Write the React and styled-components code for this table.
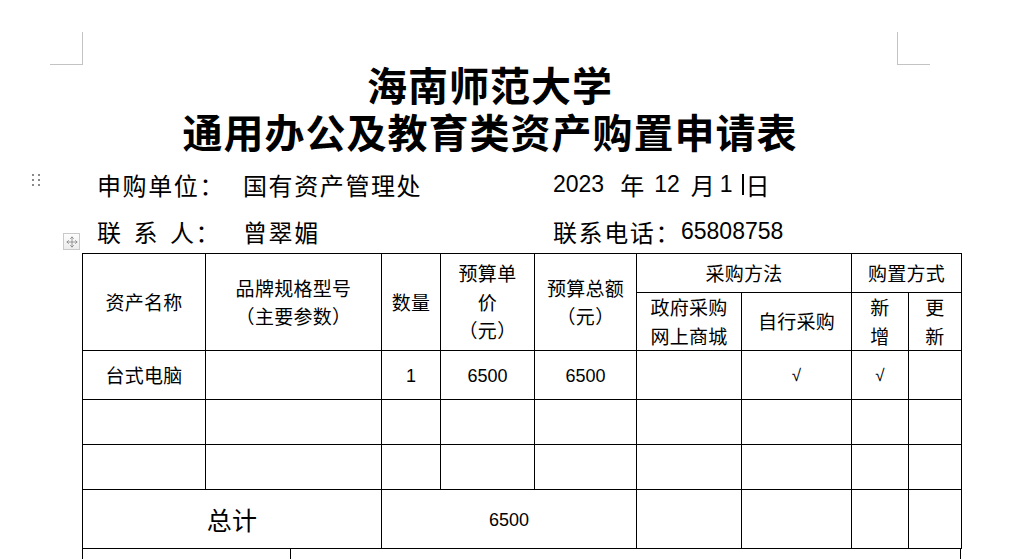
import React from "react";
import styled, { createGlobalStyle } from "styled-components";
import { Move } from "lucide-react";

const GlobalStyle = createGlobalStyle`
  html, body {
    margin: 0;
    padding: 0;
    background: #fff;
    height: 559px;
    overflow: hidden;
  }
  body {
    font-family: "Noto Sans CJK SC", sans-serif;
    color: #000;
  }
`;

const Page = styled.div`
  position: relative;
  width: 1009px;
  height: 559px;
  overflow: hidden;
`;

// word page corner marks
const CropRow = styled.div`
  display: flex;
  justify-content: space-between;
  margin: 0 79px 0 50px;
  padding-top: 32px;
`;

const CropMark = styled.div`
  width: 33px;
  height: 33px;
  border-bottom: 1px solid #c3c3c3;
  ${(p) => (p.$side === "left" ? "border-right" : "border-left")}: 1px solid #c3c3c3;
  box-sizing: border-box;
`;

const Title = styled.h1`
  margin: -4px 29px 0 0;
  font-size: 40px;
  line-height: 47px;
  font-weight: 700;
  letter-spacing: 1px;
  text-align: center;
`;

const DragDots = styled.div`
  position: absolute;
  left: 32px;
  top: 174px;
  display: grid;
  grid-template-columns: 2px 2px;
  gap: 3px 4px;

  span {
    width: 2px;
    height: 2px;
    background: #8a8a8a;
  }
`;

const Info = styled.div`
  margin-top: 4px;
`;

const InfoRow = styled.div`
  display: flex;
  align-items: center;
  box-sizing: border-box;
  height: 47px;
  padding: 4px 0 0 97px;
  font-size: 24px;
  letter-spacing: 1.6px;
  white-space: nowrap;
`;

const Field = styled.div`
  display: flex;
  align-items: center;
  width: ${(p) => p.$w || 456}px;
`;

const Label = styled.span`
  display: inline-block;
  width: 146px;
`;

const Spread = styled.span`
  letter-spacing: 12.5px;
`;

const Num = styled.span`
  font-family: "Liberation Sans", sans-serif;
  font-size: 23px;
  letter-spacing: 0;
`;

const Unit = styled.span`
  margin: 0 ${(p) => p.$r || 0}px 0 ${(p) => p.$l || 0}px;
  letter-spacing: 0;
`;

const Caret = styled.span`
  display: inline-block;
  width: 2px;
  height: 21px;
  background: #000;
  margin: 0 2px 0 9px;
`;

const TableWrap = styled.div`
  position: relative;
  margin-left: 82px;
  width: 879px;
`;

const MoveHandle = styled.div`
  position: absolute;
  left: -19px;
  top: -20px;
  width: 15px;
  height: 15px;
  border: 1px solid #c9c9c9;
  background: linear-gradient(#fdfdfd, #ececec);
  display: flex;
  align-items: center;
  justify-content: center;
  color: #7c7c7c;
`;

const Table = styled.table`
  border-collapse: collapse;
  table-layout: fixed;
  width: 879px;
  font-size: 19px;
  letter-spacing: 0.3px;
`;

const Cell = styled.td`
  border: 1px solid #000;
  padding: 0;
  text-align: center;
  vertical-align: middle;
  line-height: 28.5px;
  height: ${(p) => p.$h}px;
  font-size: ${(p) => (p.$big ? "25px" : "inherit")};
`;

const Digits = styled.span`
  font-family: "Liberation Sans", sans-serif;
  font-size: 18px;
  letter-spacing: 0;
`;

const Check = styled.span`
  font-family: "Liberation Sans", sans-serif;
  font-size: 17px;
`;

const BottomRow = styled.div`
  display: grid;
  grid-template-columns: 208px 1fr;
  height: 40px;
  border-left: 1px solid #000;
  border-right: 1px solid #000;
  box-sizing: border-box;

  div:first-child {
    border-right: 1px solid #000;
  }
`;

const colWidths = [123, 176, 59, 94, 102, 105, 110, 57, 53];

const rows = [
  { h: 48, cells: ["台式电脑", "", "1", "6500", "6500", "", "√", "√", ""] },
  { h: 44, cells: ["", "", "", "", "", "", "", "", ""] },
  { h: 44, cells: ["", "", "", "", "", "", "", "", ""] },
];

function renderCell(value) {
  if (value === "√") return <Check>√</Check>;
  if (/^\d+$/.test(value)) return <Digits>{value}</Digits>;
  return value;
}

export default function App() {
  return (
    <Page>
      <GlobalStyle />
      <CropRow>
        <CropMark $side="left" />
        <CropMark $side="right" />
      </CropRow>

      <Title>
        海南师范大学
        <br />
        通用办公及教育类资产购置申请表
      </Title>

      <DragDots>
        {Array.from({ length: 6 }).map((_, i) => (
          <span key={i} />
        ))}
      </DragDots>

      <Info>
        <InfoRow>
          <Field>
            <Label>申购单位：</Label>
            <span>国有资产管理处</span>
          </Field>
          <Field $w={300}>
            <Num>2023</Num>
            <Unit $l={16} $r={10}>年</Unit>
            <Num>12</Num>
            <Unit $l={11} $r={5}>月</Unit>
            <Num>1</Num>
            <Caret />
            <Unit>日</Unit>
          </Field>
        </InfoRow>
        <InfoRow>
          <Field>
            <Label>
              <Spread>联系</Spread>人：
            </Label>
            <span>曾翠媚</span>
          </Field>
          <Field $w={300}>
            <span>联系电话：</span>
            <Num>65808758</Num>
          </Field>
        </InfoRow>
      </Info>

      <TableWrap>
        <MoveHandle>
          <Move size={12} strokeWidth={1.5} />
        </MoveHandle>
        <Table>
          <colgroup>
            {colWidths.map((w, i) => (
              <col key={i} style={{ width: w }} />
            ))}
          </colgroup>
          <tbody>
            <tr>
              <Cell rowSpan={2}>资产名称</Cell>
              <Cell rowSpan={2}>
                品牌规格型号
                <br />
                （主要参数）
              </Cell>
              <Cell rowSpan={2}>数量</Cell>
              <Cell rowSpan={2}>
                预算单
                <br />
                价
                <br />
                （元）
              </Cell>
              <Cell rowSpan={2}>
                预算总额
                <br />
                （元）
              </Cell>
              <Cell $h={38} colSpan={2}>采购方法</Cell>
              <Cell colSpan={2}>购置方式</Cell>
            </tr>
            <tr>
              <Cell $h={57}>
                政府采购
                <br />
                网上商城
              </Cell>
              <Cell>自行采购</Cell>
              <Cell>
                新
                <br />
                增
              </Cell>
              <Cell>
                更
                <br />
                新
              </Cell>
            </tr>
            {rows.map((row, r) => (
              <tr key={r}>
                {row.cells.map((c, i) => (
                  <Cell key={i} $h={row.h}>
                    {renderCell(c)}
                  </Cell>
                ))}
              </tr>
            ))}
            <tr>
              <Cell $h={58} $big colSpan={2}>总计</Cell>
              <Cell colSpan={3}>
                <Digits>6500</Digits>
              </Cell>
              <Cell />
              <Cell />
              <Cell />
              <Cell />
            </tr>
          </tbody>
        </Table>
        <BottomRow>
          <div />
          <div />
        </BottomRow>
      </TableWrap>
    </Page>
  );
}
